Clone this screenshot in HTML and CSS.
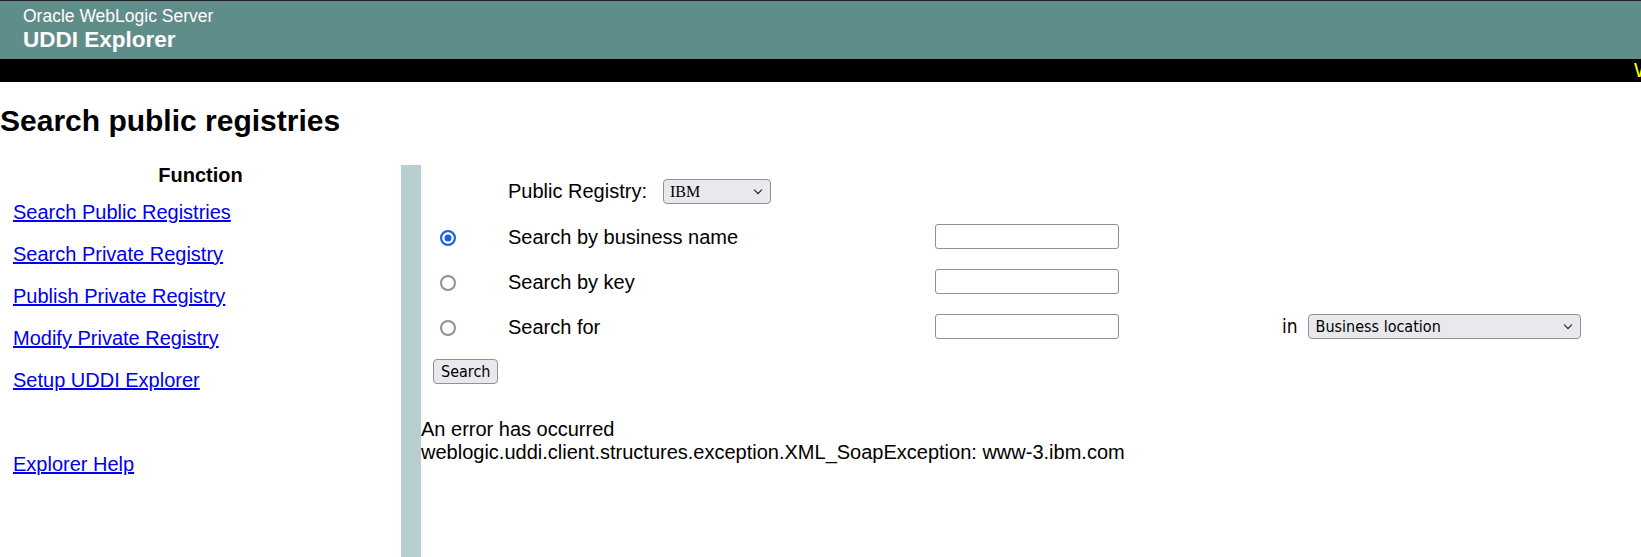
FILE: index.html
```html
<!DOCTYPE html>
<html lang="en">
<head>
<meta charset="utf-8">
<title>UDDI Explorer</title>
<link rel="stylesheet" href="styles.css">
</head>
<body>
<header class="banner">
  <div class="product">Oracle WebLogic Server</div>
  <div class="app">UDDI Explorer</div>
</header>
<div class="ticker"><span class="ticker-text">Welcome to the Oracle WebLogic Server UDDI Explorer</span></div>
<h2 class="page-title">Search public registries</h2>
<div class="main">
  <nav class="sidebar">
    <div class="nav-title">Function</div>
    <div class="nav-links">
      <a href="#">Search Public Registries</a>
      <a href="#">Search Private Registry</a>
      <a href="#">Publish Private Registry</a>
      <a href="#">Modify Private Registry</a>
      <a href="#">Setup UDDI Explorer</a>
      <span class="nav-spacer"></span>
      <a href="#">Explorer Help</a>
    </div>
  </nav>
  <div class="divider"></div>
  <section class="content">
    <form class="search-form">
      <div class="form-grid">
        <span></span>
        <div class="reg-cell">
          <span class="label">Public Registry:</span>
          <span class="select-wrap"><select class="select reg-select"><option>IBM</option><option>Microsoft</option><option>SAP</option></select></span>
        </div>
        <span></span>
        <span></span>

        <input class="radio" type="radio" name="mode" checked>
        <span class="label row-label">Search by business name</span>
        <input class="text-input" type="text">
        <span></span>

        <input class="radio" type="radio" name="mode">
        <span class="label row-label">Search by key</span>
        <input class="text-input" type="text">
        <span></span>

        <input class="radio" type="radio" name="mode">
        <span class="label row-label">Search for</span>
        <input class="text-input" type="text">
        <div class="in-cell">
          <span class="in-label">in</span>
          <span class="select-wrap"><select class="select loc-select"><option>Business location</option><option>Business category</option><option>Service type</option></select></span>
        </div>
      </div>
      <button class="search-btn" type="button">Search</button>
    </form>
    <div class="error">An error has occurred<br>weblogic.uddi.client.structures.exception.XML_SoapException: www-3.ibm.com</div>
  </section>
</div>
</body>
</html>
```
FILE: styles.css
```css
html, body {
  margin: 0;
  padding: 0;
  overflow: hidden;
}
body {
  font-family: "Liberation Sans", Arial, sans-serif;
  font-size: 20px;
  color: #000;
  background: #fff;
}
.banner {
  background: #5f8d8a;
  border-top: 1px solid #1e2222;
  padding: 5px 0 6px 23px;
  color: #fff;
}
.product {
  font-size: 17.5px;
  line-height: 21px;
}
.app {
  font-size: 22.5px;
  font-weight: bold;
  line-height: 26px;
}
.ticker {
  background: #000;
  height: 23px;
  overflow: hidden;
  white-space: nowrap;
}
.ticker-text {
  display: block;
  padding-left: 1634px;
  color: #ffff00;
  font-size: 20px;
  line-height: 23px;
}
.page-title {
  font-size: 30px;
  font-weight: bold;
  line-height: 35px;
  margin: 21px 0 24px;
}
.main {
  display: flex;
  height: 395px;
}
.sidebar {
  width: 401px;
  flex: none;
  padding-top: 2px;
}
.nav-title {
  font-weight: bold;
  text-align: center;
  line-height: 23px;
}
.nav-links {
  display: flex;
  flex-direction: column;
  align-items: flex-start;
  gap: 19px;
  padding: 14px 0 0 13px;
}
.nav-links a {
  color: #0000ee;
  text-decoration: underline;
  line-height: 23px;
}
.nav-spacer {
  height: 23px;
}
.divider {
  width: 20px;
  flex: none;
  margin-top: 3px;
  background: #b8ced1;
}
.content {
  flex: 1;
}
.form-grid {
  display: grid;
  grid-template-columns: 87px 427px 347px 1fr;
  grid-auto-rows: 45px;
  align-items: center;
  padding-top: 7px;
}
.label {
  line-height: 23px;
}
.row-label {
  margin-top: 1px;
}
.reg-cell {
  display: flex;
  align-items: center;
  gap: 16px;
}
.radio {
  appearance: none;
  -webkit-appearance: none;
  box-sizing: border-box;
  width: 16px;
  height: 16px;
  margin: 3px 0 0 19px;
  border: 2px solid #8f8f9d;
  border-radius: 50%;
  background: #fff;
  justify-self: start;
}
.radio:checked {
  border-color: #1a62dc;
  background: #1a62dc;
  box-shadow: inset 0 0 0 2.5px #fff;
}
.text-input {
  box-sizing: border-box;
  width: 184px;
  height: 25px;
  margin: 0;
  border: 1px solid #8f8f9d;
  border-radius: 3px;
  background: #fff;
  padding: 0 4px;
}
.in-cell {
  display: flex;
  align-items: center;
  gap: 10px;
}
.in-label {
  font-family: "DejaVu Sans Condensed", "DejaVu Sans", sans-serif;
  font-size: 19px;
  line-height: 23px;
}
.select-wrap {
  position: relative;
  display: inline-block;
}
.select-wrap::after {
  content: "";
  position: absolute;
  right: 10px;
  top: 8px;
  width: 5px;
  height: 5px;
  border-right: 1.5px solid #111;
  border-bottom: 1.5px solid #111;
  transform: rotate(45deg);
  pointer-events: none;
}
.select {
  appearance: none;
  -webkit-appearance: none;
  box-sizing: border-box;
  height: 25px;
  margin: 0;
  border: 1px solid #8f8f9d;
  border-radius: 4px;
  background: #e9e9ed;
  color: #000;
  padding: 0 20px 0 6px;
  display: block;
}
.reg-select {
  width: 108px;
  font-family: "Liberation Serif", "Times New Roman", serif;
  font-size: 16px;
}
.loc-select {
  width: 273px;
  font-family: "DejaVu Sans Condensed", "DejaVu Sans", sans-serif;
  font-size: 16px;
  padding-left: 7px;
}
.search-btn {
  display: block;
  box-sizing: border-box;
  height: 25px;
  margin: 10px 0 0 12px;
  padding: 0 7px;
  border: 1px solid #8f8f9d;
  border-radius: 4px;
  background: #e9e9ed;
  color: #000;
  font-family: "DejaVu Sans Condensed", "DejaVu Sans", sans-serif;
  font-size: 16px;
}
.error {
  margin-top: 34px;
  line-height: 23px;
}
```
